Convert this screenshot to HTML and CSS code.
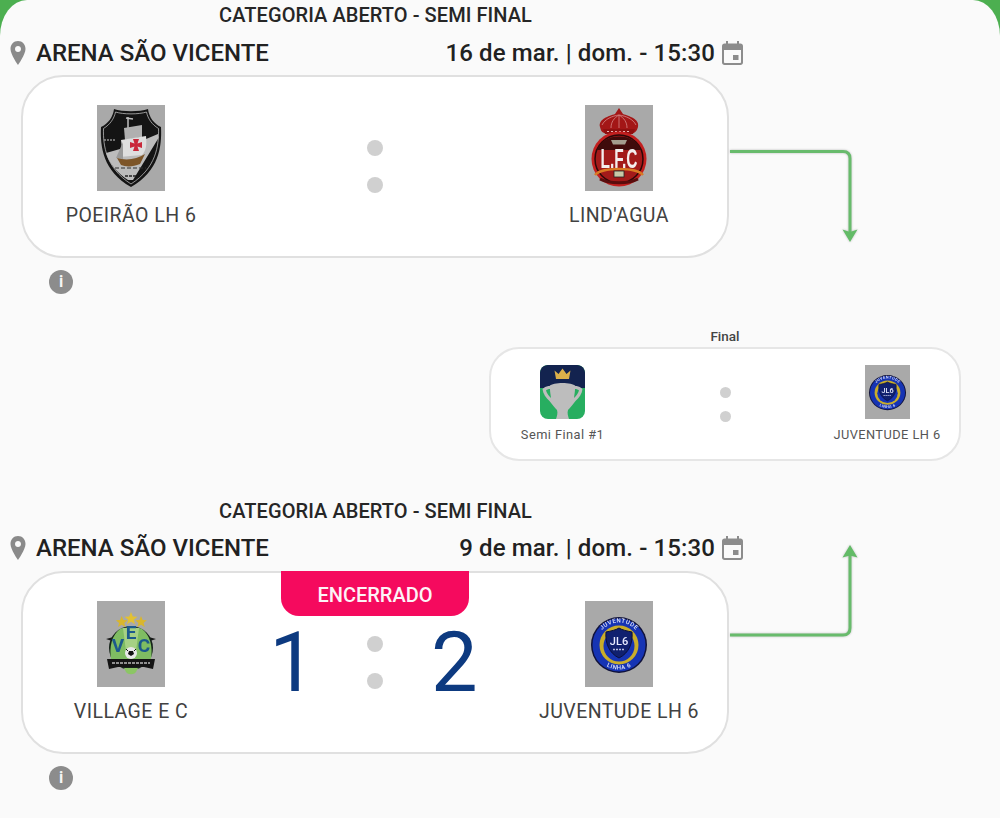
FILE: index.html
```html
<!DOCTYPE html>
<html lang="pt">
<head>
<meta charset="utf-8">
<title>Chaveamento</title>
<link rel="stylesheet" href="styles.css">
</head>
<body>
<svg class="defs" width="0" height="0" aria-hidden="true">
  <defs>
    <symbol id="logo-vasco" viewBox="0 0 68 86" preserveAspectRatio="none">
      <rect width="68" height="86" fill="#a9a9a9"/>
      <path d="M17 4C25 7 43 7 51 4C52 12 57 19 64 22C65 42 62 66 34 82C6 66 3 42 4 22C11 19 16 12 17 4Z" fill="#141414"/>
      <path d="M18.500 7C26 9.500 42 9.500 49.500 7C51 14 55 19.500 61.500 23.500C62 41 59 63 34 79C9 63 6 41 6.500 23.500C13 19.500 17 14 18.500 7Z" fill="none" stroke="#cfcfcf" stroke-width=".7"/>
      <path d="M61 29L61.500 33L36 75L31 75C20 68 12 58 9 48L30 42Z" fill="#bcbcbc"/>
      <path d="M31 12L31 23M29 13L36 14" stroke="#bdbdbd" stroke-width="1.500" fill="none"/>
      <path d="M27 23L45 20L45 32L28 35Z" fill="#b0b0b0"/>
      <path d="M24 35L49 31C50 40 49 46 45 50L22 52C25 46 25 41 24 35Z" fill="#dedede"/>
      <path d="M19 53L26 37L26 54Z" fill="#9a9a9a"/>
      <path d="M36 34L42 34L40.500 38.500L45 37L45 43L40.500 41.500L42 46L36 46L37.500 41.500L33 43L33 37L37.500 38.500Z" fill="#c9283a"/>
      <path d="M20 53C30 56 40 54 48 49L43 59C36 62 29 62 24 60Z" fill="#7d5528"/>
      <path d="M18 63H49" stroke="#2f2f2f" stroke-width="1" stroke-dasharray="4 2" fill="none"/>
      <path d="M28 71H40" stroke="#222" stroke-width="1.600" stroke-dasharray="3 1" fill="none"/>
      <path d="M7 35H19" stroke="#8f8f8f" stroke-width="1.500" stroke-dasharray="2 1" fill="none"/>
    </symbol>
    <symbol id="logo-lfc" viewBox="0 0 68 86" preserveAspectRatio="none">
      <rect width="68" height="86" fill="#a9a9a9"/>
      <path d="M15 22C13 14 24 11 30 9L34 3L38 9C44 11 55 14 53 22C52 26 50 27 49 28H19C17 27 16 26 15 22Z" fill="#a31616"/>
      <path d="M17 20C20 14 27 11 34 10C41 11 48 14 51 20M26 23C26 17 29 13 34 10C39 13 42 17 42 23M34 10V23" stroke="#cf7a7a" stroke-width=".9" fill="none"/>
      <path d="M18 24H50L48 29H20Z" fill="#8f1010"/>
      <path d="M22 26.500H46" stroke="#e6b8b8" stroke-width="1" stroke-dasharray="2 2"/>
      <circle cx="34" cy="54" r="27.500" fill="#c21f1f"/>
      <circle cx="34" cy="54" r="24" fill="#a31a1a" stroke="#2c0808" stroke-width="1.500"/>
      <path d="M12 45C15 36 24 31.500 34 31.500C44 31.500 53 36 56 45Z" fill="#3f0b0b"/>
      <path d="M26 35H42L40 39.500H28Z" fill="#a39c8e"/>
      <text class="lfc-text" x="34" y="63" text-anchor="middle" textLength="37" lengthAdjust="spacingAndGlyphs">L.F.C</text>
      <path d="M10 70C17 62 51 62 58 70" stroke="#d97a24" stroke-width="2.600" fill="none"/>
      <rect x="29" y="66" width="10" height="6" fill="#c8c8a8" stroke="#222" stroke-width=".8"/>
      <path d="M15 74C24 79 44 79 53 74" stroke="#5a0d0d" stroke-width="3" fill="none"/>
    </symbol>
    <symbol id="logo-vec" viewBox="0 0 68 86" preserveAspectRatio="none">
      <rect width="68" height="86" fill="#a9a9a9"/>
      <path d="M9 38L20 35L22 29H46L48 35L59 38L50 41H18Z" fill="#181818"/>
      <circle cx="34" cy="47" r="22" fill="#16231a"/>
      <path d="M14 58C12 45 15 34 23 28C26 26 42 26 45 28C53 34 56 45 54 58Z" fill="#7fbd62"/>
      <path d="M26 27H42L39 50H29Z" fill="#a6d184"/>
      <text class="vec-text" x="34" y="38" text-anchor="middle">E</text>
      <text class="vec-text" x="21" y="51" text-anchor="middle">V</text>
      <text class="vec-text" x="47" y="51" text-anchor="middle">C</text>
      <circle cx="34" cy="52" r="6" fill="#e8e8e8"/>
      <path d="M32 50L36 50L37 53L34 55L31 53Z" fill="#111"/>
      <path d="M29 48L31 50M39 48L37 50" stroke="#111" stroke-width="1"/>
      <path d="M10 58L58 58L56 68L47 66H21L12 68Z" fill="#141414"/>
      <path d="M15 62H53" stroke="#b9b9b9" stroke-width="1.600" stroke-dasharray="3 1"/>
      <path d="M27 67H41L39 71C37 74 31 74 29 71Z" fill="#8cc665"/>
      <path d="M24.700 15L26.300 19L30.500 19.200L27.300 22L28.400 26L24.700 23.700L21 26L22.100 22L18.900 19.200L23.100 19Z" fill="#d9b62d"/>
      <path d="M34 11L35.800 15.500L40.500 15.700L36.900 18.700L38.100 23.200L34 20.700L29.900 23.200L31.100 18.700L27.500 15.700L32.200 15.500Z" fill="#e2c133"/>
      <path d="M44 15L45.600 19L49.800 19.200L46.600 22L47.700 26L44 23.700L40.300 26L41.400 22L38.200 19.200L42.400 19Z" fill="#d9b62d"/>
    </symbol>
    <symbol id="logo-juv" viewBox="0 0 68 86" preserveAspectRatio="none">
      <rect width="68" height="86" fill="#a9a9a9"/>
      <circle cx="34" cy="44" r="28" fill="#10123a"/>
      <circle cx="34" cy="44" r="26.500" fill="#1634b4"/>
      <circle cx="34" cy="44" r="19.500" fill="#c9ad2a"/>
      <circle cx="34" cy="45" r="15.500" fill="#1634b4"/>
      <path id="juv-arc" d="M11.500 44A22.500 22.500 0 0 1 56.500 44" fill="none"/>
      <path id="juv-arc-low" d="M9.500 44A24.500 24.500 0 0 0 58.500 44" fill="none"/>
      <text class="juv-arc-text"><textPath href="#juv-arc" startOffset="50%" text-anchor="middle">JUVENTUDE</textPath></text>
      <text class="juv-arc-text"><textPath href="#juv-arc-low" startOffset="50%" text-anchor="middle">LINHA 6</textPath></text>
      <path d="M21 31C26 30 31 29 34 27C37 29 42 30 47 31C48 42 44 52 34 57C24 52 20 42 21 31Z" fill="#10206f" stroke="#0a0f3a" stroke-width="1"/>
      <text class="juv-text" x="34" y="44" text-anchor="middle">JL6</text>
      <path d="M28 48.500H40" stroke="#b7bde0" stroke-width="1.500" stroke-dasharray="2 1"/>
    </symbol>
    <symbol id="logo-cup" viewBox="0 0 45 54" preserveAspectRatio="none">
      <rect width="45" height="54" rx="8" fill="#27ae60"/>
      <path d="M0 23V8C0 3.600 3.600 0 8 0H37C41.400 0 45 3.600 45 8V23Z" fill="#13234f"/>
      <path d="M14.500 5.500L18.500 9L22.500 3.500L26.500 9L30.500 5.500L29 14H16Z" fill="#dcb04a"/>
      <path d="M2.500 24C6 21 8 21 9.500 21C13 17 32 17 35.500 21C37 21 39 21 42.500 24C42 29 39 33 35.500 36C33 39 30 43 28 45C27 48 28 51 29 54H16C17 51 18 48 17 45C15 43 12 39 9.500 36C6 33 3 29 2.500 24ZM6 25.500C7 29 9 31 11 33C10.500 29 10 26.500 10 24C8.500 24 7 24.500 6 25.500ZM39 25.500C38 24.500 36.500 24 35 24C35 26.500 34.500 29 34 33C36 31 38 29 39 25.500Z" fill="#bdbdbd" fill-rule="evenodd"/>
    </symbol>
    <symbol id="icon-pin" viewBox="0 0 16 24">
      <path d="M8 0C3.600 0 .5 3.500 .5 8C.5 13.500 8 24 8 24C8 24 15.500 13.500 15.500 8C15.500 3.500 12.400 0 8 0ZM8 11C6.300 11 5 9.700 5 8C5 6.300 6.300 5 8 5C9.700 5 11 6.300 11 8C11 9.700 9.700 11 8 11Z" fill="#8a8a8a" fill-rule="evenodd"/>
    </symbol>
    <symbol id="icon-calendar" viewBox="0 0 21 24">
      <path d="M4 0H6V2.500H15V0H17V2.500H18.500C19.900 2.500 21 3.600 21 5V21.500C21 22.900 19.900 24 18.500 24H2.500C1.100 24 0 22.900 0 21.500V5C0 3.600 1.100 2.500 2.500 2.500H4ZM2 9V21C2 21.600 2.400 22 3 22H18C18.600 22 19 21.600 19 21V9ZM11 14H16.500V19H11Z" fill="#8c8c8c" fill-rule="evenodd"/>
    </symbol>
  </defs>
</svg>

<main class="page">
  <section class="block">
    <h2 class="category">CATEGORIA ABERTO - SEMI FINAL</h2>
    <div class="meta">
      <div class="venue"><svg class="icon-pin"><use href="#icon-pin"/></svg><span>ARENA SÃO VICENTE</span></div>
      <div class="when"><span>16 de mar. | dom. - 15:30</span><svg class="icon-calendar"><use href="#icon-calendar"/></svg></div>
    </div>
    <article class="match">
      <div class="team"><svg class="crest"><use href="#logo-vasco"/></svg><span class="team-name">POEIRÃO LH 6</span></div>
      <div class="center"><div class="colon"><i class="dot"></i><i class="dot"></i></div></div>
      <div class="team"><svg class="crest"><use href="#logo-lfc"/></svg><span class="team-name">LIND'AGUA</span></div>
    </article>
    <div class="info" aria-label="Informações">i</div>
  </section>

  <section class="final">
    <h3 class="final-title">Final</h3>
    <article class="final-card">
      <div class="final-team"><svg class="final-crest"><use href="#logo-cup"/></svg><span class="final-name">Semi Final #1</span></div>
      <div class="final-center"><i class="final-dot"></i><i class="final-dot"></i></div>
      <div class="final-team"><svg class="final-crest"><use href="#logo-juv"/></svg><span class="final-name">JUVENTUDE LH 6</span></div>
    </article>
  </section>

  <section class="block block-second">
    <h2 class="category">CATEGORIA ABERTO - SEMI FINAL</h2>
    <div class="meta">
      <div class="venue"><svg class="icon-pin"><use href="#icon-pin"/></svg><span>ARENA SÃO VICENTE</span></div>
      <div class="when"><span>9 de mar. | dom. - 15:30</span><svg class="icon-calendar"><use href="#icon-calendar"/></svg></div>
    </div>
    <article class="match">
      <div class="status">ENCERRADO</div>
      <div class="team"><svg class="crest"><use href="#logo-vec"/></svg><span class="team-name">VILLAGE E C</span></div>
      <div class="center">
        <span class="score score-home">1</span>
        <div class="colon"><i class="dot"></i><i class="dot"></i></div>
        <span class="score score-away">2</span>
      </div>
      <div class="team"><svg class="crest"><use href="#logo-juv"/></svg><span class="team-name">JUVENTUDE LH 6</span></div>
    </article>
    <div class="info" aria-label="Informações">i</div>
  </section>

  <svg class="connectors" width="1000" height="818" viewBox="0 0 1000 818" aria-hidden="true">
    <path class="line" d="M730 151.500H843C847.500 151.500 850 154 850 158.500V232"/>
    <path class="head" d="M842.500 229.500L850 232L857.500 229.500L850 242Z"/>
    <path class="line" d="M730 635H843C847.500 635 850 632.500 850 628V555"/>
    <path class="head" d="M842.500 557.500L850 555.500L857.500 557.500L850 545Z"/>
  </svg>
</main>
</body>
</html>
```
FILE: styles.css
```css
* { box-sizing: border-box; }

html, body {
  margin: 0;
  padding: 0;
}

body {
  width: 1000px;
  height: 818px;
  overflow: hidden;
  background: #4caf50;
  font-family: Roboto, "Noto Sans", sans-serif;
  color: #212121;
}

.defs { position: absolute; }

.page {
  position: relative;
  width: 1000px;
  height: 818px;
  overflow: hidden;
  background: #fafafa;
  border-top-left-radius: 27px 36px;
  border-top-right-radius: 27px 36px;
}

.block {
  width: 733px;
  margin-left: 10px;
}

.block-second { margin-top: 34.5px; }

.category {
  margin: 0;
  height: 30px;
  padding-right: 2px;
  font-size: 20px;
  line-height: 30px;
  letter-spacing: .07px;
  font-weight: 500;
  text-align: center;
  color: #262626;
}

.meta {
  display: flex;
  justify-content: space-between;
  align-items: center;
  height: 45px;
}

.venue, .when {
  display: flex;
  align-items: center;
  font-size: 24px;
  font-weight: 500;
  color: #212121;
}

.venue { gap: 10px; }
.when { gap: 7px; letter-spacing: .12px; }

.icon-pin { width: 16px; height: 24px; }
.icon-calendar { width: 21px; height: 24px; }

.match {
  position: relative;
  display: grid;
  grid-template-columns: 216px 1fr 216px;
  width: 708px;
  height: 183px;
  margin-left: 11px;
  padding-top: 28px;
  background: #fff;
  border: 2px solid #e0e0e0;
  border-radius: 42px;
}

.team {
  display: flex;
  flex-direction: column;
  align-items: center;
}

.crest {
  display: block;
  width: 68px;
  height: 86px;
  filter: blur(.35px);
}

.team-name {
  margin-top: 13px;
  font-size: 19.5px;
  line-height: 24px;
  letter-spacing: .45px;
  color: #424242;
}

.center {
  display: grid;
  grid-template-columns: 1fr 16px 1fr;
  column-gap: 62px;
  align-items: start;
}

.colon {
  grid-column: 2;
  display: flex;
  flex-direction: column;
  gap: 21px;
  width: 16px;
  padding-top: 35px;
}

.dot {
  display: block;
  width: 16px;
  height: 16px;
  border-radius: 50%;
  background: #d0d0d0;
}

.score {
  margin-top: 14px;
  font-size: 83px;
  line-height: 96px;
  color: #0d3a80;
}

.score-home { justify-self: end; margin-right: -11px; }
.score-away { justify-self: start; margin-left: -14px; }

.status {
  position: absolute;
  top: -2px;
  left: 258px;
  width: 188px;
  height: 45px;
  padding-top: 3px;
  background: #f50a5e;
  border-radius: 0 0 18px 18px;
  color: #fdf3f7;
  font-size: 20px;
  font-weight: 500;
  line-height: 42px;
  text-align: center;
}

.info {
  width: 24px;
  height: 24px;
  margin: 12px 0 0 39px;
  border-radius: 50%;
  background: #8c8c8c;
  color: #f5f5f5;
  font-size: 16px;
  font-weight: 700;
  line-height: 24px;
  text-align: center;
}

.final {
  width: 472px;
  margin: 34px 0 0 489px;
}

.final-title {
  margin: 0 0 3px;
  height: 16px;
  font-size: 13.5px;
  font-weight: 500;
  line-height: 16px;
  text-align: center;
  color: #444;
}

.final-card {
  display: grid;
  grid-template-columns: 143px 1fr 144px;
  height: 114px;
  padding-top: 16px;
  background: #fff;
  border: 2px solid #e6e6e6;
  border-radius: 30px;
}

.final-team {
  display: flex;
  flex-direction: column;
  align-items: center;
}

.final-crest {
  display: block;
  width: 45px;
  height: 54px;
  filter: blur(.3px);
}

.final-name {
  margin-top: 8px;
  font-size: 12.8px;
  line-height: 16px;
  letter-spacing: .45px;
  color: #555;
  white-space: nowrap;
}

.final-center {
  display: flex;
  flex-direction: column;
  align-items: center;
  gap: 13px;
  padding-top: 22px;
  padding-left: 1px;
}

.final-dot {
  display: block;
  width: 11px;
  height: 11px;
  border-radius: 50%;
  background: #d0d0d0;
}

.connectors {
  position: absolute;
  top: 0;
  left: 0;
  pointer-events: none;
  filter: drop-shadow(0 0 1px #bbb);
}

.line {
  fill: none;
  stroke: #68bb6c;
  stroke-width: 3;
}

.head { fill: #62bb66; }

.lfc-text {
  font-family: "Liberation Sans", sans-serif;
  font-size: 28px;
  font-weight: 700;
  fill: #f4eeee;
}

.vec-text {
  font-family: Roboto, sans-serif;
  font-size: 19px;
  font-weight: 700;
  fill: #1c5a8c;
}

.juv-text {
  font-family: Roboto, sans-serif;
  font-size: 11px;
  font-weight: 500;
  fill: #e8ebff;
}

.juv-arc-text {
  font-family: Roboto, sans-serif;
  font-size: 6px;
  font-weight: 500;
  letter-spacing: .5px;
  fill: #e0e4f8;
}
```
